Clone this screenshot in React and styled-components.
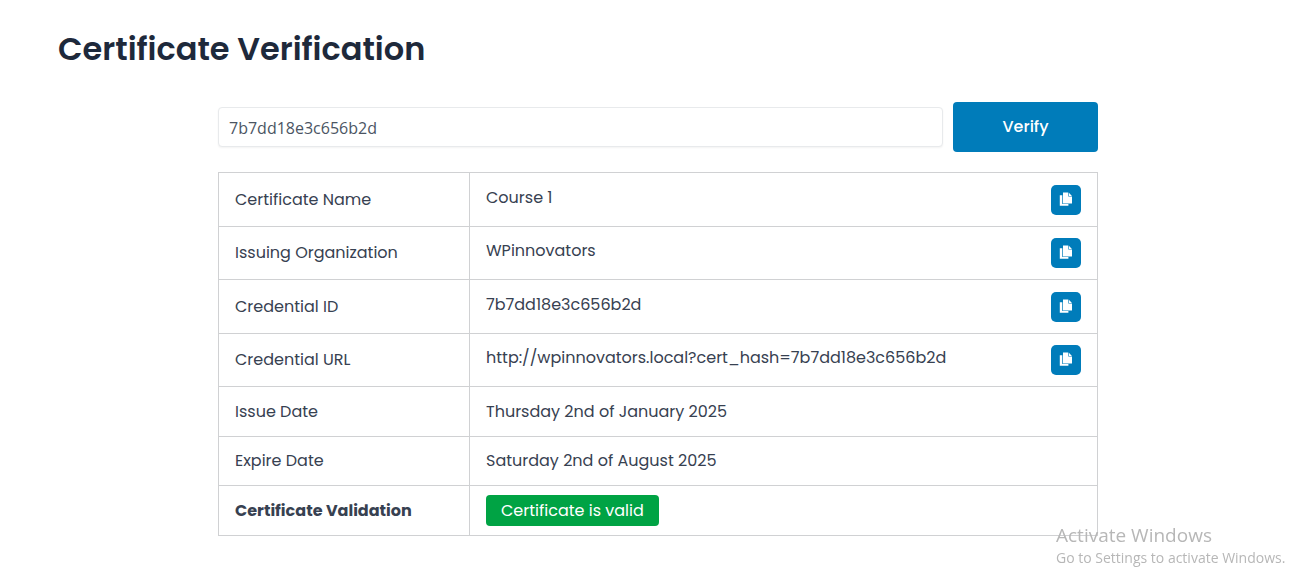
import React, { useState } from "react";
import styled, { createGlobalStyle, css } from "styled-components";

const GlobalStyle = createGlobalStyle`
  *, *::before, *::after { box-sizing: border-box; }
  body {
    margin: 0;
    background: #fff;
    color: #374151;
    font-family: Poppins, Inter, sans-serif;
    font-size: 16px;
    line-height: 24px;
  }
`;

const Page = styled.main`
  padding: 24px 0 24px 19px;
`;

const Container = styled.div`
  max-width: 1200px;
  margin: 0 auto;
`;

const Title = styled.h1`
  margin: 0 0 28px;
  color: #1e293b;
  font-size: 32px;
  line-height: 50px;
  font-weight: 600;
`;

const Content = styled.div`
  max-width: 880px;
  margin: 0 auto;
`;

const SearchForm = styled.form`
  display: flex;
  align-items: center;
  gap: 10px;
  margin-bottom: 20px;
`;

const HashInput = styled.input`
  flex: 1;
  min-width: 0;
  height: 40px;
  padding: 2px 10px 0;
  border: 1px solid #e8eaec;
  border-radius: 4px;
  box-shadow: 0 1px 2px rgba(0, 0, 0, 0.05);
  background: #fff;
  color: #4b5563;
  font: 16px "Segoe UI", "Open Sans", sans-serif;
  outline: none;
`;

const VerifyButton = styled.button`
  width: 145px;
  height: 50px;
  border: 0;
  border-radius: 4px;
  background: #007cba;
  color: #fff;
  font: inherit;
  font-weight: 500;
  cursor: pointer;
`;

const DetailsTable = styled.table`
  width: 100%;
  border-collapse: collapse;
  table-layout: fixed;
`;

const Row = styled.tr`
  height: ${(p) => (p.$tall ? 54 : 50)}px;
  &:nth-child(even) {
    height: ${(p) => (p.$tall ? 53 : 49)}px;
  }
`;

const cell = css`
  padding: 0 16px;
  border: 1px solid #d0d1d3;
  text-align: left;
  vertical-align: middle;
`;

const Label = styled.th`
  ${cell}
  width: 251px;
  font-weight: ${(p) => (p.$strong ? 700 : 400)};
`;

const Value = styled.td`
  ${cell}
`;

const CopyLine = styled.div`
  display: flex;
  align-items: flex-start;
  justify-content: space-between;
  line-height: 26px;
`;

const CopyButton = styled.button`
  display: flex;
  align-items: center;
  justify-content: center;
  flex: none;
  width: 30px;
  height: 30px;
  padding: 0;
  border: 0;
  border-radius: 5px;
  background: #007cba;
  cursor: pointer;
`;

const Badge = styled.span`
  display: block;
  width: fit-content;
  padding: 4px 15px 3px;
  border-radius: 4px;
  background: #00a344;
  color: #fff;
`;

const Watermark = styled.aside`
  position: fixed;
  left: calc(100% - 241px);
  bottom: 19px;
  color: #b7b7b7;
  font-family: "Segoe UI", "Open Sans", sans-serif;
  font-size: 14px;
  line-height: 20px;
  white-space: nowrap;
  pointer-events: none;
`;

const WatermarkTitle = styled.div`
  font-size: 19px;
  line-height: 26px;
`;

const CopyIcon = () => (
  <svg width="14" height="16" viewBox="0 0 14 16" aria-hidden="true">
    <path d="M.8 3.2h2.5v8.9h6.1v1.7H.8z" fill="#fff" />
    <path d="M4 .6h5.3v3.9h3.7v6.9H4z" fill="#fff" />
    <path d="M9.9.7 12.9 3.9h-3z" fill="#fff" />
  </svg>
);

const details = [
  { label: "Certificate Name", value: "Course 1", copy: true },
  { label: "Issuing Organization", value: "WPinnovators", copy: true },
  { label: "Credential ID", value: "7b7dd18e3c656b2d", copy: true },
  {
    label: "Credential URL",
    value: "http://wpinnovators.local?cert_hash=7b7dd18e3c656b2d",
    copy: true,
  },
  { label: "Issue Date", value: "Thursday 2nd of January 2025" },
  { label: "Expire Date", value: "Saturday 2nd of August 2025" },
];

export default function App() {
  const [hash, setHash] = useState("7b7dd18e3c656b2d");
  return (
    <>
      <GlobalStyle />
      <Page>
        <Container>
          <Title>Certificate Verification</Title>
          <Content>
            <SearchForm onSubmit={(e) => e.preventDefault()}>
              <HashInput
                type="text"
                aria-label="Credential ID"
                value={hash}
                onChange={(e) => setHash(e.target.value)}
              />
              <VerifyButton type="submit">Verify</VerifyButton>
            </SearchForm>
            <DetailsTable>
              <tbody>
                {details.map(({ label, value, copy }) => (
                  <Row key={label} $tall={copy}>
                    <Label scope="row">{label}</Label>
                    <Value>
                      {copy ? (
                        <CopyLine>
                          <span>{value}</span>
                          <CopyButton
                            type="button"
                            aria-label={`Copy ${label}`}
                            onClick={() => navigator.clipboard?.writeText(value)}
                          >
                            <CopyIcon />
                          </CopyButton>
                        </CopyLine>
                      ) : (
                        value
                      )}
                    </Value>
                  </Row>
                ))}
                <Row>
                  <Label scope="row" $strong>
                    Certificate Validation
                  </Label>
                  <Value>
                    <Badge>Certificate is valid</Badge>
                  </Value>
                </Row>
              </tbody>
            </DetailsTable>
          </Content>
        </Container>
      </Page>
      <Watermark>
        <WatermarkTitle>Activate Windows</WatermarkTitle>
        <div>Go to Settings to activate Windows.</div>
      </Watermark>
    </>
  );
}
